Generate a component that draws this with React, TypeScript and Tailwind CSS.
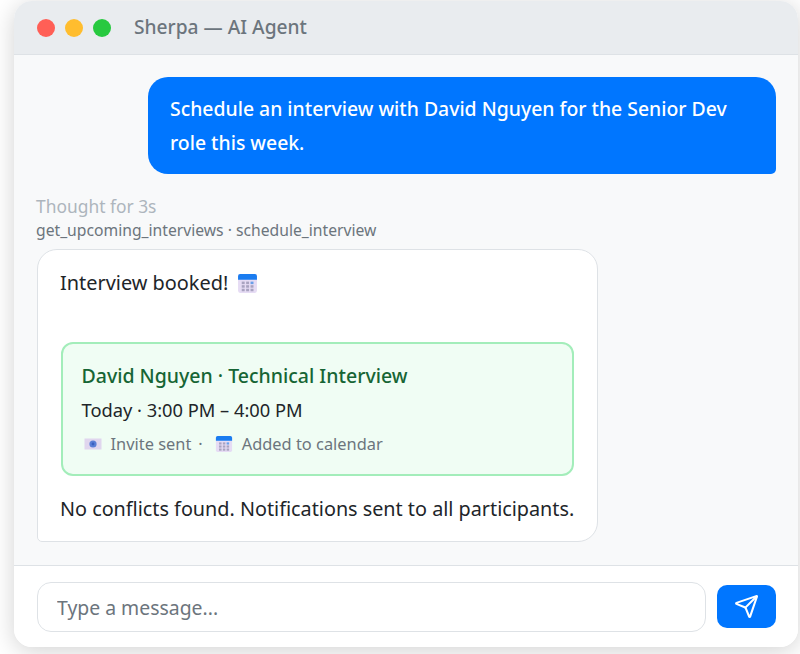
import { Send } from "lucide-react";

function CalendarIcon({ size }: { size: number }) {
  const cells = [];
  for (let r = 0; r < 3; r++) {
    for (let c = 0; c < 3; c++) {
      cells.push(<rect key={`${r}-${c}`} x={4.5 + c * 4.2} y={8.2 + r * 3.4} width="2.8" height="2.4" fill={r === 0 && c === 2 ? "#6a9fe8" : "#a9a3c0"} />);
    }
  }
  return (
    <svg width={size} height={size} viewBox="0 0 20 20" className="shrink-0">
      <rect x="1" y="1" width="18" height="18" rx="2" fill="#e6dcf4" />
      <path d="M1 6.5V3a2 2 0 0 1 2-2h14a2 2 0 0 1 2 2v3.5z" fill="#1a7cf0" />
      {cells}
    </svg>
  );
}

function InviteIcon() {
  return (
    <svg width="18" height="14" viewBox="0 0 18 14" className="ml-[2px] shrink-0">
      <rect x="0.5" y="1.5" width="17" height="11" fill="#e0d6ee" />
      <circle cx="9" cy="7" r="3.6" fill="#5b7fd6" />
      <circle cx="9" cy="7" r="1.4" fill="#3a5fc0" />
    </svg>
  );
}

export default function App() {
  return (
    <div className="h-[654px] w-[800px] overflow-hidden bg-white pt-[1px] pr-[2px] pl-[14px] font-['Noto_Sans','Open_Sans',sans-serif]">
      <div className="flex h-[646px] flex-col overflow-hidden rounded-[18px] bg-white shadow-[0_4px_24px_rgba(0,0,0,0.18)]">
        <div className="flex h-[54px] shrink-0 items-center border-b border-[#dee2e6] bg-[#e9ecef] pl-[23px]">
          <div className="flex gap-[10px]">
            <span className="h-[18px] w-[18px] rounded-full bg-[#ff5f56]" />
            <span className="h-[18px] w-[18px] rounded-full bg-[#ffbd2e]" />
            <span className="h-[18px] w-[18px] rounded-full bg-[#27c93f]" />
          </div>
          <span className="ml-[23px] text-[19.2px] font-medium text-[#6c757d]">Sherpa — AI Agent</span>
        </div>
        <div className="flex min-h-0 flex-1 flex-col bg-[#f8f9fa] pt-[22px] pr-[8px] pl-[22px]">
          <div className="flex justify-end pr-[14px]">
            <div className="w-[628px] rounded-[20px] rounded-br-[5px] bg-[#0076ff] px-[22px] py-[14.5px] text-[19.4px] leading-[34px] font-medium text-white">
              Schedule an interview with David Nguyen for the Senior Dev role this week.
            </div>
          </div>
          <div className="mt-[21px] text-[17.4px] leading-[22px] text-[#adb5bd]">Thought for 3s</div>
          <div className="mt-[2px] text-[15.7px] leading-[22px] text-[#6c757d]">get_upcoming_interviews · schedule_interview</div>
          <div className="mt-[8px] ml-[1px] w-[561px] rounded-[20px] rounded-bl-[5px] border border-[#dee2e6] bg-white pt-[19px] pr-[22px] pb-[18px] pl-[22px] text-[#212529]">
            <div className="flex items-center gap-[9px] text-[19.9px] leading-[28px]">
              Interview booked! <CalendarIcon size={21} />
            </div>
            <div className="mx-[1px] mt-[45px] rounded-[12px] border-[2px] border-[#a3edba] bg-[#f0fdf4] pt-[17.5px] pr-[18px] pb-[17.5px] pl-[18.5px]">
              <div className="text-[19.5px] leading-[28px] font-medium text-[#166534]">David Nguyen · Technical Interview</div>
              <div className="mt-[6px] text-[18.3px] leading-[28px]">Today · 3:00 PM – 4:00 PM</div>
              <div className="mt-[7px] flex items-center text-[16.4px] leading-[26px] text-[#6c757d]">
                <InviteIcon />
                <span className="ml-[9px]">Invite sent</span>
                <span className="ml-[7px]">·</span>
                <span className="ml-[12px]"><CalendarIcon size={18} /></span>
                <span className="ml-[9px]">Added to calendar</span>
              </div>
            </div>
            <div className="mt-[19px] text-[19.8px] leading-[28px] whitespace-nowrap">No conflicts found. Notifications sent to all participants.</div>
          </div>
        </div>
        <div className="flex h-[82px] shrink-0 items-start border-t border-[#dee2e6] bg-white pt-[16px] pr-[8px] pl-[23px]">
          <input
            placeholder="Type a message..."
            className="h-[50px] w-[669px] rounded-[14px] border border-[#dee2e6] bg-white px-[19px] text-[19.4px] text-[#212529] placeholder:text-[#6c757d] focus:outline-none"
          />
          <button className="mt-[3px] ml-[11px] flex h-[43px] w-[59px] items-center justify-center rounded-[10px] bg-[#0076ff] text-white">
            <Send size={25} strokeWidth={2} />
          </button>
        </div>
      </div>
    </div>
  );
}
